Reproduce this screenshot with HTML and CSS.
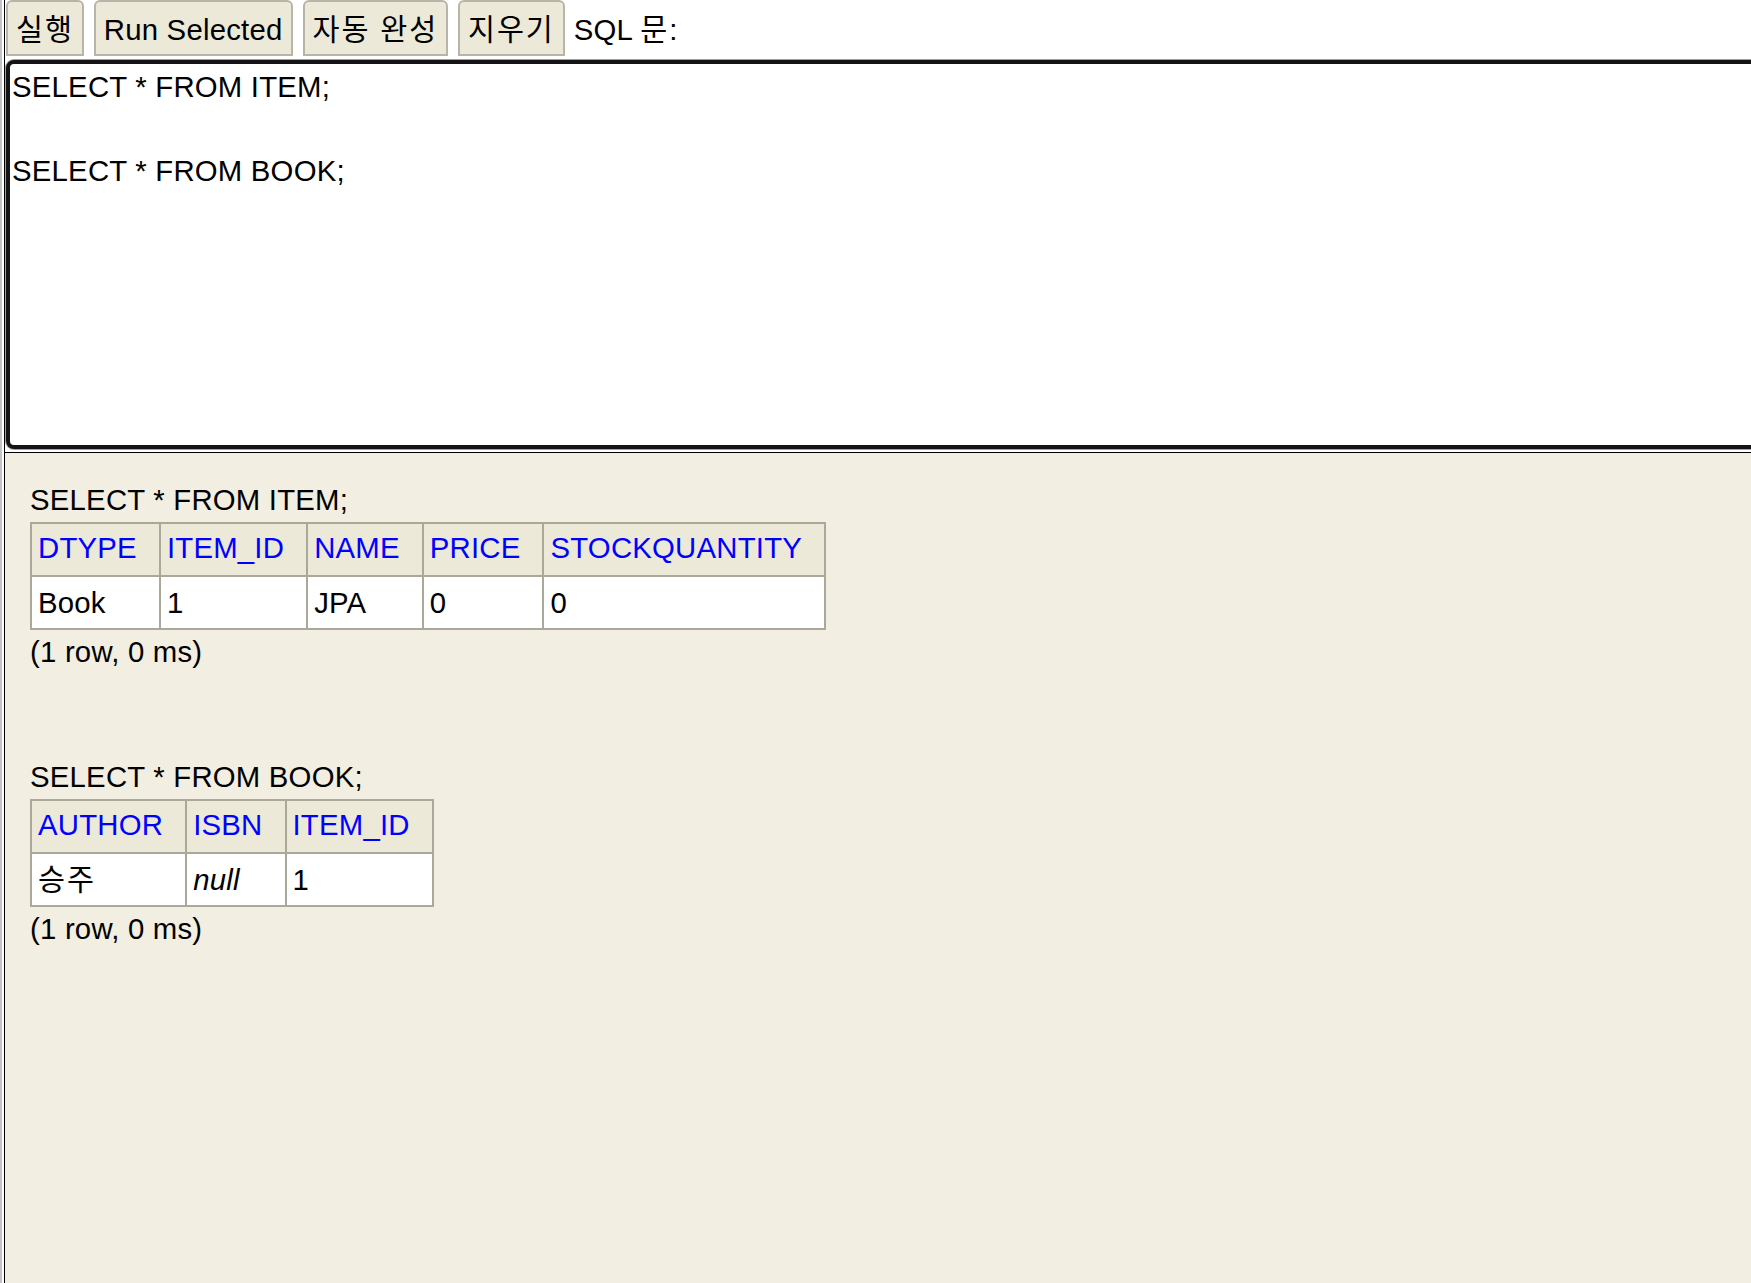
FILE: index.html
```html
<!DOCTYPE html>
<html lang="ko">
<head>
<meta charset="utf-8">
<title>H2 Console</title>
<link rel="stylesheet" href="styles.css">
</head>
<body>
<div class="window">
  <div class="frames">
    <div class="frame-top">
      <div class="toolbar">
        <button class="btn"><span class="ko">실행</span></button>
        <button class="btn">Run Selected</button>
        <button class="btn"><span class="ko">자동 완성</span></button>
        <button class="btn"><span class="ko">지우기</span></button>
        <span class="label">SQL <span class="ko">문</span>:</span>
      </div>
      <textarea class="sql" spellcheck="false">SELECT * FROM ITEM;

SELECT * FROM BOOK;</textarea>
    </div>
    <div class="frame-result">
      <div class="query">
        <div class="stmt">SELECT * FROM ITEM;</div>
        <table class="result">
          <tr><th>DTYPE</th><th>ITEM_ID</th><th>NAME</th><th>PRICE</th><th>STOCKQUANTITY</th></tr>
          <tr><td>Book</td><td>1</td><td>JPA</td><td>0</td><td>0</td></tr>
        </table>
        <div class="info">(1 row, 0 ms)</div>
      </div>
      <div class="query">
        <div class="stmt">SELECT * FROM BOOK;</div>
        <table class="result">
          <tr><th>AUTHOR</th><th>ISBN</th><th>ITEM_ID</th></tr>
          <tr><td><span class="ko">승주</span></td><td class="null">null</td><td>1</td></tr>
        </table>
        <div class="info">(1 row, 0 ms)</div>
      </div>
    </div>
  </div>
</div>
</body>
</html>
```
FILE: styles.css
```css
html, body {
  margin: 0;
  height: 100%;
}
body {
  font-family: "Liberation Sans", "Noto Sans CJK KR", Arial, sans-serif;
  font-size: 29.33px;
  letter-spacing: 0.22px;
  color: #000;
  background: #fff;
  overflow: hidden;
}
.ko {
  letter-spacing: 1.9px;
}
.window {
  height: 100%;
  box-sizing: border-box;
  border-left: 2px solid #c4c4c4;
  padding-left: 2px;
  background: #fff;
}
.frames {
  height: 100%;
  display: flex;
  flex-direction: column;
  border-left: 1px solid #000;
}
.frame-top {
  height: 452px;
  flex: none;
  background: #fff;
  overflow: hidden;
}
.toolbar {
  display: flex;
  align-items: center;
  gap: 10px;
  height: 56px;
  padding-left: 1px;
}
.btn {
  height: 56px;
  box-sizing: border-box;
  border: 2px solid #b8b5a8;
  border-radius: 6px 6px 0 0;
  background: #ece9d8;
  font: inherit;
  letter-spacing: inherit;
  color: #000;
  line-height: 34px;
  padding: 4px 8px 0;
  margin: 0;
}
.label {
  margin-left: -1px;
  padding-top: 4px;
  line-height: 34px;
}
.sql {
  display: block;
  box-sizing: border-box;
  margin: 4px 0 0 1px;
  width: calc(100% + 40px);
  height: 389px;
  border: 4px solid #141414;
  border-radius: 8px;
  box-shadow: 0 0 0 1px #a0a0a0;
  padding: 2px 2px;
  font: inherit;
  letter-spacing: inherit;
  line-height: 42px;
  color: #000;
  background: #fff;
  resize: none;
  outline: none;
  overflow: hidden;
}
.frame-result {
  flex: 1;
  background: #f2eee1;
  border-top: 1px solid #000;
  padding: 30px 0 0 25px;
  line-height: 34px;
}
.query + .query {
  margin-top: 91px;
}
.result {
  border-collapse: collapse;
  margin: 5px 0;
}
.result th,
.result td {
  border: 2px solid #aca899;
  padding: 7px 22px 10px 6px;
  line-height: 34px;
  text-align: left;
  font-weight: normal;
  white-space: nowrap;
}
.result td {
  padding-top: 9px;
  padding-bottom: 8px;
  background: #fff;
}
.result th {
  background: #ece9d8;
  color: #0000ff;
}
.result td.null {
  font-style: italic;
}
```
